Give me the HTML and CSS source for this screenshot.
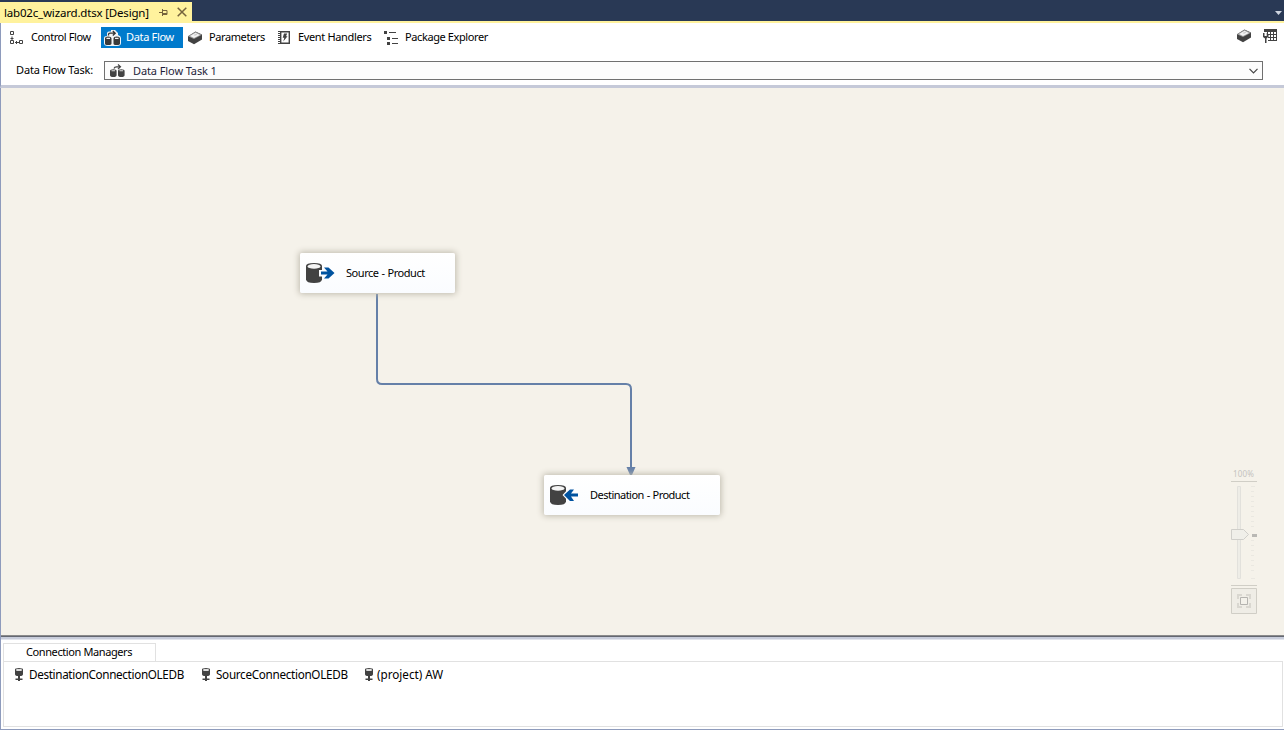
FILE: index.html
```html
<!DOCTYPE html>
<html lang="en">
<head>
<meta charset="utf-8">
<title>lab02c_wizard.dtsx [Design]</title>
<link rel="stylesheet" href="styles.css">
</head>
<body>
<svg width="0" height="0" class="defs">
  <defs>
    <symbol id="flow" viewBox="0 0 15 14">
      <path d="M4 4.500Q4.500 2.800 6.500 2.800H10M8 .5L10.500 2.800 8 5.100" fill="none" stroke="#424242" stroke-width="1.200"/>
      <path d="M0 7Q0 5.200 3.300 5.200T6.600 7V11Q6.600 13 3.300 13T0 11ZM8 7Q8 5.200 11.300 5.200T14.600 7V11Q14.600 13 11.300 13T8 11Z" fill="#424242"/>
      <path d="M1.500 6.800H5.100M9.500 6.800H13.100" stroke="#ddd" stroke-width="1.100"/>
    </symbol>
    <symbol id="box" viewBox="0 0 16 14">
      <path d="M8.500 .5L15 3.500V8.500L7 13.200 1 10V5.200Z" fill="#424242"/>
      <path d="M1 5.200L8.500 .7 15 3.700 7 8Z" fill="#999"/>
      <path d="M3 5L8.500 1.800 13 3.900 7 7Z" fill="#f4f4f4"/>
      <path d="M6.500 4L9 2.700 10.500 3.500 8 4.800Z" fill="#ccc"/>
    </symbol>
    <symbol id="conn" viewBox="0 0 8 13">
      <path d="M0 1.500Q0 0 4 0T8 1.500V6Q8 8 5 8V10.500H7.500V12H5V13H3V12H.5V10.500H3V8Q0 8 0 6Z" fill="#424242"/>
      <path d="M1.300 1H6.700V3H1.300Z" fill="#ddd"/>
    </symbol>
    <symbol id="db" viewBox="0 0 30 22">
      <path d="M0 4Q0 1 8 1T16 4V17.500Q15.500 21 8 21T0 17.500Z" fill="#424242"/>
      <ellipse cx="8" cy="4.400" rx="6.400" ry="2.300" fill="#f4f4f4"/>
    </symbol>
  </defs>
</svg>
<div class="window">
  <header class="tabstrip">
    <div class="doc-tab">
      <span class="t-doc">lab02c_wizard.dtsx [Design]</span>
      <svg class="pin" width="9" height="8" viewBox="0 0 9 8"><path d="M0 4.500H3M3.500 1V8M3.500 2.500H8V6.500H3.500M3.500 5.500H8" fill="none" stroke="#75633d"/></svg>
      <svg class="close" width="10" height="10" viewBox="0 0 10 10"><path d="M.7 .7L9.300 9.300M9.300 .7L.7 9.300" stroke="#75633d" stroke-width="1.500"/></svg>
    </div>
    <svg class="more" width="7" height="4" viewBox="0 0 7 4"><path d="M0 0H7L3.500 4Z" fill="#ced4df"/></svg>
  </header>
  <nav class="toolbar">
    <div class="item control"><svg width="15" height="15" viewBox="0 0 15 15"><path d="M1.500 1.500H4.500V4.500H1.500ZM1.500 10.500H4.500V13.500H1.500ZM10.500 10.500H13.500V13.500H10.500ZM3 6.500V10M1.500 8.500H4.500M6 12.500H10M7.500 11V14" fill="none" stroke="#424242"/></svg><span class="t-control">Control Flow</span></div>
    <div class="item active"><svg width="17" height="16" viewBox="0 0 17 16"><path d="M3 6V3.500Q3 1.500 5 1.500H7V0H11L14 3V5Q17 6 17 8V13Q17 16 13 16H4Q0 16 0 13V8Q0 6 3 6Z" fill="#f2f4f5"/><path d="M4.500 5.500V4.500Q4.500 3.200 6 3.200H11M8.800 1L11.200 3.200 8.800 5.400" fill="none" stroke="#333" stroke-width="1.300"/><path d="M1 8.500H7.500V13.500Q7.500 15 4.200 15T1 13.500ZM9.500 8.500H16V13.500Q16 15 12.700 15T9.500 13.500ZM1 8.500Q1 6.500 4.200 6.500T7.500 8.500M9.500 8.500Q9.500 6.500 12.700 6.500T16 8.500" fill="#3a3a3a"/><path d="M2.500 8.300H6M11 8.300H14.500" stroke="#eee" stroke-width="1.300"/></svg><span class="t-data">Data Flow</span></div>
    <div class="item params"><svg width="16" height="14"><use href="#box"/></svg><span class="t-params">Parameters</span></div>
    <div class="item events"><svg width="12" height="13" viewBox="0 0 12 13"><path d="M2.700 .7H11.300V12.300H2.700Z" fill="none" stroke="#424242" stroke-width="1.400"/><path d="M0 .5H2M0 2.500H2M0 4.500H2M0 6.500H2M0 8.500H2M0 10.500H2M0 12.500H2" stroke="#424242"/><path d="M6 2.500H9.200L8 5.300H9.500L5.300 10.500 6.300 6.800H4.700Z" fill="#424242"/></svg><span class="t-events">Event Handlers</span></div>
    <div class="item package"><svg width="14" height="14" viewBox="0 0 14 14"><path d="M0 0H3V3H0ZM3 6H6V9H3ZM3 11H6V14H3ZM5 1H12V2H5ZM8 7H14V8H8ZM8 12H14V13H8Z" fill="#424242"/></svg><span class="t-package">Package Explorer</span></div>
    <div class="tools">
      <svg width="16" height="14"><use href="#box"/></svg>
      <svg width="14" height="14" viewBox="0 0 14 14"><path d="M1 0H14V12H5V8H4V3H1ZM5 3V5H7V3ZM8 3V5H10V3ZM11 3V5H13V3ZM5.500 6V8H7V6ZM8 6V8H10V6ZM11 6V8H13V6ZM5 9V11H7V9ZM8 9V11H10V9ZM11 9V11H13V9Z" fill="#424242" fill-rule="evenodd"/><path d="M0 4V8L2 9.500V14H3.500V9.500L5 8V4H3.700V7H1.500V4Z" fill="#424242"/></svg>
    </div>
  </nav>
  <div class="task-row">
    <label class="t-task">Data Flow Task:</label>
    <div class="combo"><svg class="dark" width="15" height="14"><use href="#flow"/></svg><span class="t-combo">Data Flow Task 1</span>
      <svg class="chev" width="9" height="6" viewBox="0 0 9 6"><path d="M.5 .8L4.500 4.800 8.500 .8" fill="none" stroke="#444" stroke-width="1.200"/></svg></div>
  </div>
  <main class="canvas">
    <svg class="wire" width="270" height="190" viewBox="0 0 270 190"><path d="M7 0V85Q7 90 12 90H256Q261 90 261 95V174" fill="none" stroke="#6580a8" stroke-width="2"/><path d="M256.500 173H265.500L262 181H260Z" fill="#6580a8"/></svg>
    <div class="node source"><svg width="30" height="22"><use href="#db"/><path d="M13 8H19V4H23L29 11 23 18H18V14.500H13Z" fill="#fcfdff"/><path d="M15 9.500H21.500L18 5.500H22.500L28.500 11 22.500 16.500H18L21.500 12.500H15Z" fill="#0053a0"/></svg><span class="t-source">Source - Product</span></div>
    <div class="node dest"><svg width="30" height="22"><use href="#db"/><path d="M12.500 11L19 4H25V8H29V15H25V18H19Z" fill="#fcfdff"/><path d="M28 9.500H21L24 5.500H20L14 11 20 17H24L21 12.500H28Z" fill="#0053a0"/></svg><span class="t-dest">Destination - Product</span></div>
    <div class="zoomer">
      <span class="t-zoom">100%</span>
      <svg width="26" height="134" viewBox="0 0 26 134"><path d="M0 .5H26M0 104.500H26" stroke="#d0cec6"/><path d="M6.500 5.500H9.500V97.500H6.500Z" fill="#eeede7" stroke="#e2e1dc"/><path d="M20 5.500H24M20 10.500H23M20 15.500H23M20 20.500H23M20 25.500H23M20 30.500H23M20 35.500H23M20 40.500H23M20 45.500H23M20 59.500H23M20 64.500H23M20 69.500H23M20 74.500H23M20 79.500H23M20 84.500H23M20 89.500H23M20 97.500H24" stroke="#eae8e1"/><path d="M.5 48.500H12.500L17.500 53.500 12.500 58.500H.5Z" fill="#f0efe9" stroke="#d0cfca"/><path d="M21 53H26V56H21Z" fill="#b9b8b4"/><path d="M.5 107.500H25.500V132.500H.5Z" fill="#efede6" stroke="#d0cec6"/><path d="M6 113H11V115H8V118H6ZM15 113H20V118H18V115H15ZM6 122H8V125H11V127H6ZM18 122H20V127H15V125H18Z" fill="#d9d7d0"/><path d="M9.500 116.500H16.500V123.500H9.500Z" fill="#f3f1ea" stroke="#b4b3af"/></svg>
    </div>
  </main>
  <div class="splitter"></div>
  <section class="managers">
    <div class="mgr-tab"><span class="t-mgr">Connection Managers</span></div>
    <div class="mgr-list">
      <div class="conn c1"><svg width="8" height="13"><use href="#conn"/></svg><span class="t-c1">DestinationConnectionOLEDB</span></div>
      <div class="conn c2"><svg width="8" height="13"><use href="#conn"/></svg><span class="t-c2">SourceConnectionOLEDB</span></div>
      <div class="conn c3"><svg width="8" height="13"><use href="#conn"/></svg><span class="t-c3">(project) AW</span></div>
    </div>
  </section>
</div>
</body>
</html>
```
FILE: styles.css
```css
* { box-sizing: border-box; }
body { margin: 0; font: 11px/16px "Noto Sans", "Open Sans", sans-serif; color: #000; background: #fff; overflow: hidden; }
svg { display: block; flex: none; }
span, label { white-space: nowrap; flex: none; }
.defs { position: absolute; }
.window { width: 1284px; height: 730px; display: flex; flex-direction: column; border-bottom: 1px solid #8e9bbc; }
.tabstrip { height: 23px; flex: none; background: #293955; border-bottom: 2px solid #fff29d; display: flex; justify-content: space-between; align-items: flex-end; }
.doc-tab { width: 192px; height: 19px; background: #fff29d; display: flex; align-items: center; padding-left: 4px; }
.t-doc { font-size: 11.5px; letter-spacing: -.18px; padding-top: 2px; }
.pin { margin-left: auto; }
.close { margin: 0 5px 0 9px; }
.more { margin: 0 2px 6px 0; }
.toolbar { height: 32px; flex: none; display: flex; align-items: flex-start; padding-top: 4px; border-left: 1px solid #8e9bbc; }
.item { display: flex; align-items: center; height: 21px; }
.item span { padding-bottom: 2px; }
.control { width: 100px; padding-left: 8px; gap: 7px; }
.active { width: 82px; background: #007acc; color: #fff; padding-left: 3px; gap: 5px; }
.params { width: 95px; padding-left: 4px; gap: 6px; }
.events { width: 106px; gap: 8px; }
.package { gap: 7px; }
.t-control { letter-spacing: -.42px; }
.t-data { letter-spacing: -.33px; }
.t-params { letter-spacing: -.4px; }
.t-events { letter-spacing: -.35px; }
.t-package { letter-spacing: -.4px; }
.tools { margin-left: auto; display: flex; gap: 11px; padding: 2px 7px 0 0; }
.dark { margin: 0 8px 0 1px; }
.task-row { height: 33px; flex: none; display: flex; align-items: flex-start; padding: 6px 21px 0 15px; border-left: 1px solid #8e9bbc; border-bottom: 3px solid #c5c9d8; }
.t-task { width: 88px; padding-top: 1px; letter-spacing: -.14px; }
.combo { flex: 1; height: 19px; border: 1px solid #707070; background: #fcfcfc; color: #1e1e3a; display: flex; align-items: center; padding: 0 4px; }
.t-combo { letter-spacing: -.1px; padding-top: 1px; }
.chev { margin-left: auto; }
.canvas { height: 547px; flex: none; position: relative; background: #f5f2ea; border-left: 1px solid #8e9bbc; }
.wire { position: absolute; left: 369px; top: 206px; }
.node { position: absolute; height: 40px; background: linear-gradient(#fff, #fafcff); border-radius: 2px; box-shadow: 0 0 6px 1px #bdb9ac; display: flex; align-items: center; padding-left: 6px; gap: 10px; }
.source { left: 299px; top: 165px; width: 155px; }
.dest { left: 543px; top: 387px; width: 176px; }
.t-source { letter-spacing: -.45px; word-spacing: .5px; }
.t-dest { letter-spacing: -.52px; word-spacing: .5px; }
.zoomer { position: absolute; left: 1230px; top: 380px; display: flex; flex-direction: column; }
.t-zoom { font-size: 8px; line-height: 12px; height: 13px; color: #c4c3bf; padding-left: 2px; letter-spacing: .2px; }
.splitter { height: 5px; flex: none; background: linear-gradient(#8b8b8b 0 1px, #646872 1px 2px, #c8cddb 2px 4px, #e2e5ed 4px); border-left: 1px solid #8e9bbc; }
.managers { flex: 1; border-left: 1px solid #8e9bbc; padding: 3px 1px 2px 2px; display: flex; flex-direction: column; }
.mgr-tab { height: 18px; width: 153px; border: 1px solid #e1e1e1; border-bottom: 0; padding-left: 22px; line-height: 16px; }
.t-mgr { letter-spacing: -.4px; }
.mgr-list { flex: 1; border: 1px solid #e1e1e1; display: flex; align-items: flex-start; padding: 4px 0 0 11px; font-size: 11.7px; }
.conn { display: flex; align-items: center; gap: 6px; }
.t-c1 { letter-spacing: -.34px; }
.t-c2 { letter-spacing: -.3px; }
.c1 { width: 187px; }
.c2 { width: 163px; }
.c3 { gap: 4px; }
```
